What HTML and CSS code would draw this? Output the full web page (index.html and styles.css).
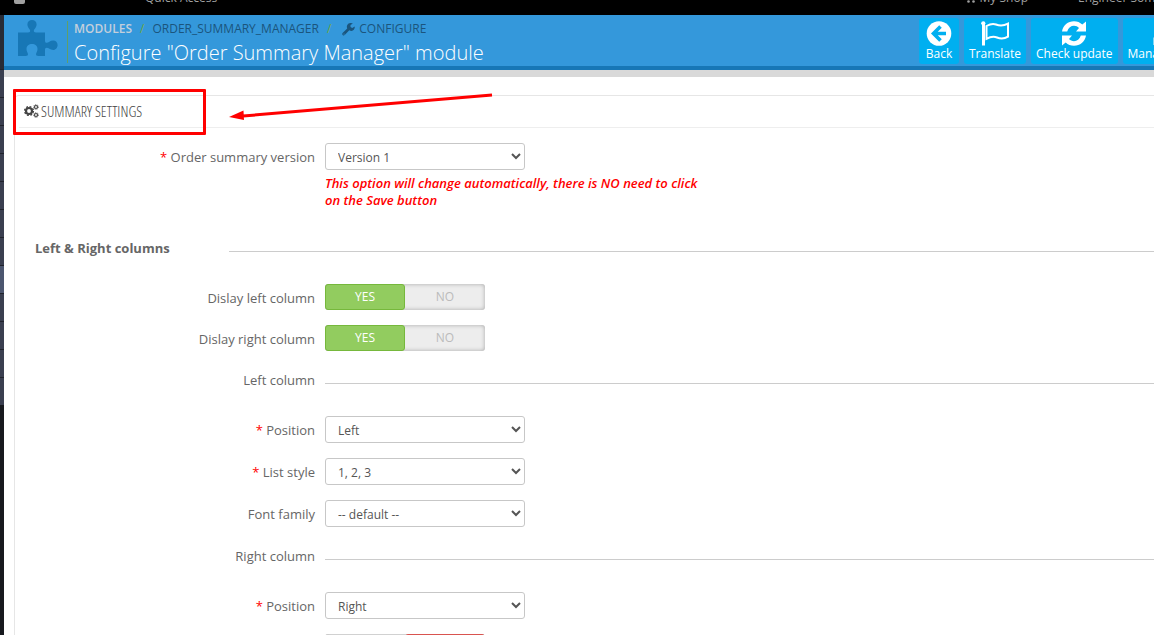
FILE: index.html
```html
<!DOCTYPE html>
<html lang="en">
<head>
<meta charset="utf-8">
<title>Configure "Order Summary Manager" module</title>
<link rel="stylesheet" href="styles.css">
</head>
<body>
<header class="topbar">
  <span class="topbar-logo"></span>
  <a class="topbar-quick" href="#">Quick Access</a>
  <a class="topbar-shop" href="#"><svg width="11" height="10" viewBox="0 0 11 10" fill="currentColor"><path d="M0 0h2l1 4h7v1H3l.4 1H10v1H3z"/><circle cx="3.500" cy="8.500" r="1.300"/><circle cx="8.500" cy="8.500" r="1.300"/></svg>My Shop</a>
  <a class="topbar-user" href="#">Engineer Some</a>
</header>
<div class="layout">
  <nav class="sidebar" aria-label="Main menu">
    <div class="sidebar-search"></div>
    <a class="sidebar-item" href="#" aria-label="Dashboard"></a>
    <a class="sidebar-item" href="#" aria-label="Catalog"></a>
    <a class="sidebar-item" href="#" aria-label="Orders"></a>
    <a class="sidebar-item" href="#" aria-label="Customers"></a>
    <a class="sidebar-item" href="#" aria-label="Price rules"></a>
    <a class="sidebar-item" href="#" aria-label="Stats"></a>
    <a class="sidebar-item" href="#" aria-label="Shipping"></a>
    <a class="sidebar-item sidebar-item-active" href="#" aria-label="Modules"></a>
    <a class="sidebar-item" href="#" aria-label="Localization"></a>
    <a class="sidebar-item" href="#" aria-label="Preferences"></a>
    <a class="sidebar-item" href="#" aria-label="Advanced"></a>
    <a class="sidebar-item" href="#" aria-label="Administration"></a>
  </nav>
  <main class="main">
    <div class="page-head">
      <svg class="page-icon" width="40" height="37" viewBox="0 0 40 37" fill="#1777b6"><path d="M0 12.500h8c3 0 4.200-.4 4.200-1.600 0-2-2.800-3.400-2.800-6.500C9.400 1.700 11.300 0 14 0s4.600 1.700 4.600 4.400c0 3.100-2.800 4.500-2.800 6.500 0 1.200 1.200 1.600 4.200 1.600h7v8c0 1.700.6 2.300 1.600 2.300 2 0 3.200-2.300 6.600-2.300 2.600 0 4.400 2 4.400 4.500S37.800 30 35.200 30c-3.200 0-4.600-2.200-6.600-2.200-1 0-1.600.7-1.600 2.200v6h-6.500c-1.900 0-2.700-.8-2.400-2.200.3-1.500 1.400-2.500 1.400-4.900 0-3-2.400-4.900-5.500-4.900s-5.500 1.900-5.500 4.900c0 2.400 1.100 3.400 1.400 4.900.3 1.400-.5 2.200-2.400 2.200H0z"/></svg>
      <div class="page-titles">
        <nav class="breadcrumb" aria-label="Breadcrumb">
          <a class="crumb crumb-root" href="#">MODULES</a>
          <span class="crumb-sep">/</span>
          <a class="crumb" href="#">ORDER_SUMMARY_MANAGER</a>
          <span class="crumb-sep">/</span>
          <a class="crumb crumb-icon" href="#"><svg width="13" height="13" viewBox="0 0 13 13" fill="currentColor"><path d="M7.300 7.300 2.700 12a1.400 1.400 0 0 1-2-.1 1.400 1.400 0 0 1-.1-1.900L5.200 5.500A4 4 0 0 1 5.300 2C6 .5 7.500-.1 9 0c.7 0 1.300.2 1.900.6L8.500 2v2l1.700 1L12.700 3.600c.4 2-1.200 4.200-3.200 4.300-.8 0-1.500-.2-2.200-.6zM2 10.400a.6.600 0 1 0 .1 1.200A.6.600 0 0 0 2 10.400z" fill-rule="evenodd"/></svg>CONFIGURE</a>
        </nav>
        <h1 class="page-title">Configure "Order Summary Manager" module</h1>
      </div>
      <div class="toolbar">
        <button class="tool" type="button"><svg width="26" height="25" viewBox="0 0 26 25"><circle cx="13" cy="12.500" r="12.300" fill="#fff"/><path d="M14.500 5.500 7.500 12.500l7 7M8.500 12.500H20" fill="none" stroke="#00aff0" stroke-width="3.600"/></svg>Back</button>
        <button class="tool" type="button"><svg width="28" height="25" viewBox="0 0 28 25" fill="none" stroke="#fff"><circle cx="2.300" cy="2.300" r="2.100" fill="#fff" stroke="none"/><path d="M2.500 3v21.500" stroke-width="3"/><path d="M5.500 5C9 3 12 2.200 15 3.500c4 1.700 7 1.800 12-.8v13c-4 2.400-7 2.500-11 .8-4-1.600-7-.6-10.500 1.400z" stroke-width="2"/></svg>Translate</button>
        <button class="tool" type="button"><svg width="26" height="25" viewBox="0 0 26 25" fill="#fff"><path d="M1 10.500C2 4.300 7 .2 13 .2c3.300 0 6 1.200 8.300 3.300L25 .5v10H15l3-3.600C16.600 5.500 15 4.800 13 4.800c-3 0-5.700 2-6.800 5.700z"/><path d="M25 14.500c-1 6.200-6 10.300-12 10.300-3.300 0-6-1.200-8.300-3.300L1 24.500v-10h10l-3 3.600c1.400 1.400 3 2.100 5 2.100 3 0 5.700-2 6.800-5.700z"/></svg>Check update</button>
        <button class="tool" type="button"><svg width="30" height="25" viewBox="0 0 30 25" fill="none" stroke="#fff" stroke-width="3"><path d="M2 24v-6h26v6M15 18V8"/><rect x="10" y="2" width="10" height="6"/></svg>Manage hooks</button>
      </div>
    </div>
    <section class="panel">
      <div class="panel-heading">
        <svg width="15" height="14" viewBox="0 0 15 14" fill="none" stroke="currentColor"><circle cx="5" cy="7" r="3" stroke-width="2.200"/><circle cx="5" cy="7" r="4.400" stroke-width="1.400" stroke-dasharray="1.900 1.556"/><circle cx="12" cy="3" r="1.500" stroke-width="1.200"/><circle cx="12" cy="3" r="2.400" stroke-width=".8" stroke-dasharray="1 .885"/><circle cx="12" cy="11" r="1.500" stroke-width="1.200"/><circle cx="12" cy="11" r="2.400" stroke-width=".8" stroke-dasharray="1 .885"/></svg>
        <h2 class="panel-title">SUMMARY SETTINGS</h2>
        <div class="callout-box"></div>
        <svg class="callout-arrow" width="264" height="30" viewBox="0 0 264 30"><path d="M263 3 14 24" stroke="#f00" stroke-width="3"/><path d="M0 25 14.500 18.500 15 28z" fill="#f00"/></svg>
      </div>
      <form class="form">
        <div class="row">
          <label class="label" for="version"><span class="req">*</span> Order summary version</label>
          <div class="field">
            <select class="select" id="version"><option>Version 1</option></select>
            <p class="hint">This option will change automatically, there is NO need to click on the Save button</p>
          </div>
        </div>
        <div class="group">
          <h3 class="group-title">Left &amp; Right columns</h3>
          <hr class="rule">
        </div>
        <div class="row">
          <span class="label" id="dl">Dislay left column</span>
          <div class="switch" role="radiogroup" aria-labelledby="dl">
            <input class="switch-input" type="radio" name="left" id="left-yes" checked><label class="switch-option" for="left-yes">YES</label>
            <input class="switch-input" type="radio" name="left" id="left-no"><label class="switch-option" for="left-no">NO</label>
          </div>
        </div>
        <div class="row">
          <span class="label" id="dr">Dislay right column</span>
          <div class="switch" role="radiogroup" aria-labelledby="dr">
            <input class="switch-input" type="radio" name="right" id="right-yes" checked><label class="switch-option" for="right-yes">YES</label>
            <input class="switch-input" type="radio" name="right" id="right-no"><label class="switch-option" for="right-no">NO</label>
          </div>
        </div>
        <div class="row row-section">
          <span class="label">Left column</span>
          <hr class="rule">
        </div>
        <div class="row">
          <label class="label" for="pos-left"><span class="req">*</span> Position</label>
          <select class="select" id="pos-left"><option>Left</option></select>
        </div>
        <div class="row">
          <label class="label" for="list-style"><span class="req">*</span> List style</label>
          <select class="select" id="list-style"><option>1, 2, 3</option></select>
        </div>
        <div class="row">
          <label class="label" for="font-family">Font family</label>
          <select class="select" id="font-family"><option>-- default --</option></select>
        </div>
        <div class="row row-section">
          <span class="label">Right column</span>
          <hr class="rule">
        </div>
        <div class="row">
          <label class="label" for="pos-right"><span class="req">*</span> Position</label>
          <select class="select" id="pos-right"><option>Right</option></select>
        </div>
        <div class="row">
          <span class="label"></span>
          <div class="switch" role="radiogroup" aria-label="Right column option">
            <input class="switch-input" type="radio" name="extra" id="extra-yes"><label class="switch-option" for="extra-yes">YES</label>
            <input class="switch-input" type="radio" name="extra" id="extra-no" checked><label class="switch-option switch-option-off" for="extra-no">NO</label>
          </div>
        </div>
      </form>
    </section>
  </main>
</div>
</body>
</html>
```
FILE: styles.css
```css
* {
  box-sizing: border-box;
}

body {
  display: flex;
  flex-direction: column;
  height: 100vh;
  margin: 0;
  overflow: hidden;
  background: #fff;
  color: #666;
  font-family: "Open Sans", "Noto Sans", sans-serif;
  font-size: 13px;
}

a {
  color: inherit;
  text-decoration: none;
}

h1, h2, h3, p, hr {
  margin: 0;
}

/* Top bar */
.topbar {
  display: flex;
  flex: none;
  align-items: flex-end;
  height: 15px;
  padding: 0 0 9px 14px;
  overflow: hidden;
  background: #000;
  color: #a0a0a0;
  font-size: 12px;
  line-height: 16px;
  white-space: nowrap;
}

.topbar-logo {
  width: 11px;
  height: 10px;
  margin-bottom: 2px;
  border-radius: 2px;
  background: #a0a0a0;
}

.topbar-quick {
  margin-left: 120px;
}

.topbar-shop {
  display: flex;
  gap: 4px;
  align-items: center;
  margin-left: auto;
}

.topbar-user {
  width: 76px;
  margin-left: 50px;
}

/* Frame */
.layout {
  display: flex;
  flex: 1;
  min-height: 0;
}

.sidebar {
  flex: none;
  width: 4px;
  background: #17191e;
}

.sidebar-search {
  height: 54px;
  background: #282b35;
}

.sidebar-item {
  display: block;
  height: 28px;
  border-top: 1px solid #20232c;
  background: #3a3f50;
}

.sidebar-item-active {
  background: #4c566f;
}

.main {
  display: flex;
  flex: 1;
  flex-direction: column;
  min-width: 0;
}

/* Page header */
.page-head {
  display: flex;
  flex: none;
  height: 62px;
  padding-left: 14px;
  border-bottom: 7px solid #d9d9d9;
  background: #3498db;
  box-shadow: inset 0 -4px #1777b6;
}

.page-icon {
  flex: none;
  margin-top: 5px;
}

.page-titles {
  flex: 1;
  height: 42px;
  margin: 6px 0 0 9px;
  padding-left: 6px;
  border-left: 1px solid #5f9f6a;
  white-space: nowrap;
}

.breadcrumb {
  display: flex;
  gap: 8px;
  height: 16px;
  color: #1b557d;
  font-size: 12px;
  line-height: 16px;
}

.crumb {
  display: flex;
  gap: 4px;
  align-items: center;
}

.crumb-icon {
  margin-left: 3px;
}

.crumb-root {
  color: #c3cfdb;
  font-weight: 600;
}

.crumb-sep {
  color: #6fa83f;
}

.page-title {
  color: #fff;
  font-size: 20px;
  font-weight: 300;
  line-height: 32px;
}

.toolbar {
  display: flex;
  flex: none;
  gap: 5px;
  width: 235px;
  height: 49px;
  padding-top: 3px;
  overflow: hidden;
}

.tool {
  display: flex;
  flex: none;
  flex-direction: column;
  align-items: center;
  min-width: 40px;
  height: 46px;
  padding: 3px 5px 0;
  border: 0;
  border-radius: 3px;
  background: #00aff0;
  color: #fff;
  font: 12px/16px "Open Sans", "Noto Sans", sans-serif;
}

/* Panel */
.panel {
  flex: 1;
  min-height: 0;
  margin: 18px 0 0 10px;
  border: 1px solid #e6e6e6;
  border-right: 0;
  border-bottom: 0;
  border-radius: 5px 0 0 0;
}

.panel-heading {
  position: relative;
  display: flex;
  gap: 2px;
  align-items: center;
  height: 32px;
  margin-left: 4px;
  padding: 0 0 1px 5px;
  border-bottom: 1px solid #eee;
  color: #444;
}

.panel-title {
  font-family: "Ubuntu Condensed", "Open Sans Condensed Light", "Open Sans Condensed", "Open Sans", sans-serif;
  font-size: 15px;
  font-weight: 300;
}

.callout-box {
  position: absolute;
  top: -7px;
  left: -6px;
  width: 193px;
  height: 46px;
  border: 3px solid #f00;
  border-radius: 1px;
}

.callout-arrow {
  position: absolute;
  top: -4px;
  left: 210px;
}

/* Form */
.form {
  padding-top: 15px;
}

.row {
  display: grid;
  grid-template-columns: 300px 1fr;
  column-gap: 10px;
  align-items: start;
  margin-bottom: 15px;
}

.label {
  line-height: 28px;
  text-align: right;
}

.row > .label {
  height: 26px;
}

.req {
  color: #f00;
}

.select {
  display: block;
  width: 200px;
  height: 27px;
  padding: 2px 0 0 8px;
  border: 1px solid #c7c7c7;
  border-radius: 3px;
  background: #fff;
  color: #555;
  font: 12px "Open Sans", "Noto Sans", sans-serif;
}

.hint {
  max-width: 384px;
  margin-top: 5px;
  color: #f00;
  font-size: 13px;
  font-style: italic;
  font-weight: 600;
  line-height: 17px;
}

.group {
  display: grid;
  grid-template-columns: 184px 1fr;
  column-gap: 10px;
  align-items: start;
  margin: 29px 0 26px;
  padding-left: 20px;
}

.group-title {
  font-size: 13px;
  font-weight: 700;
  line-height: 20px;
}

.rule {
  height: 1px;
  border: 0;
  background: #ccc;
}

.group .rule {
  margin-top: 13px;
}

.row-section {
  height: 35px;
}

.row-section .rule {
  margin-top: 17px;
}

.switch {
  position: relative;
  display: flex;
  width: 160px;
  height: 26px;
  border-radius: 3px;
  background: #ededed;
  box-shadow: inset 0 0 4px rgba(0, 0, 0, .3);
}

.switch-input {
  position: absolute;
  margin: 0;
  opacity: 0;
}

.switch-option {
  flex: 1;
  border: 1px solid transparent;
  border-radius: 3px;
  color: #bbb;
  font-size: 12px;
  line-height: 24px;
  text-align: center;
}

.switch-input:checked + .switch-option {
  border-color: #76b83c;
  background: #92cc5f;
  color: #fff;
}

.switch-input:checked + .switch-option-off {
  border-color: #d9534f;
  background: #e27c79;
}
```
